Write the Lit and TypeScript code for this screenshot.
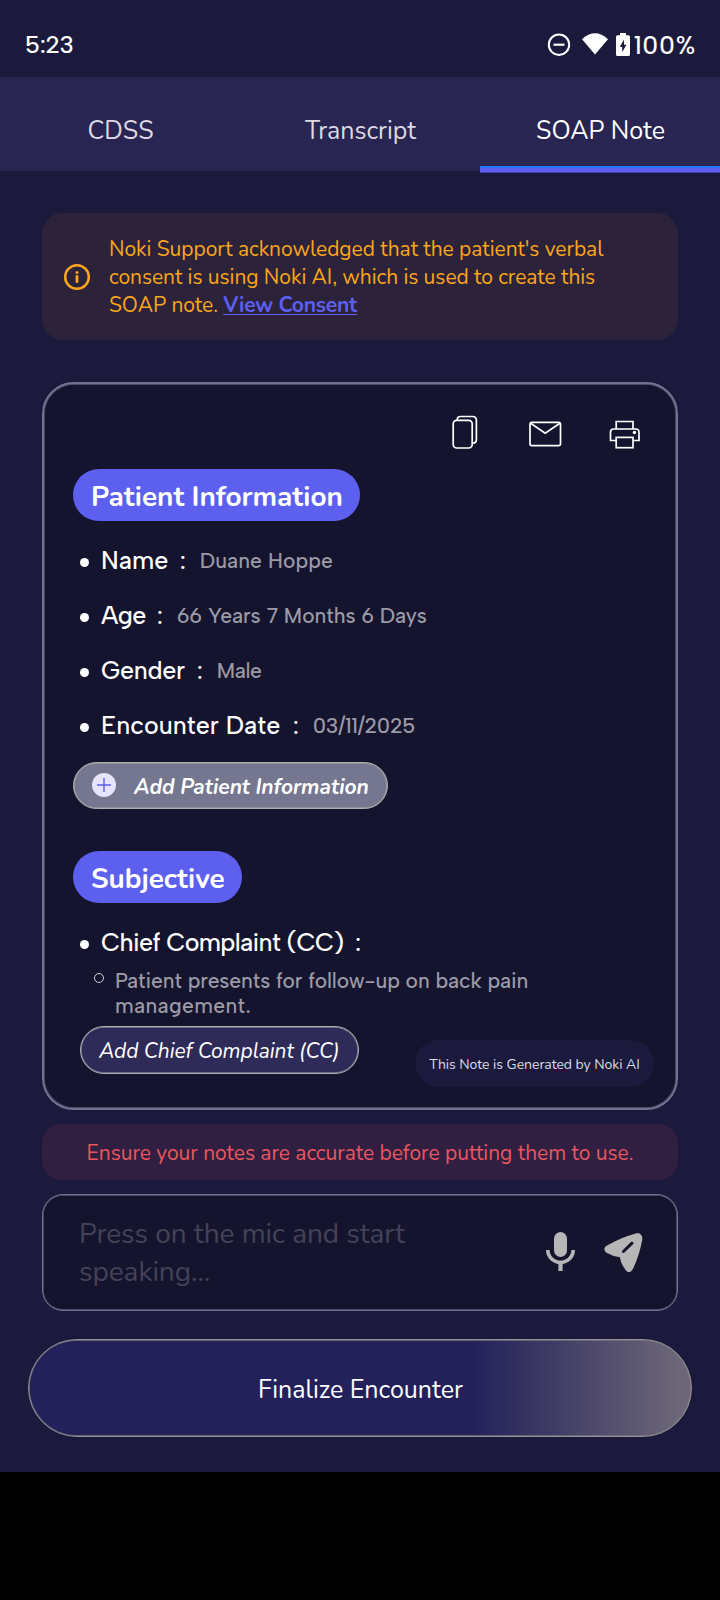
import { LitElement, html, css } from "lit";

const sharedText = css`
  * { box-sizing: border-box; }
  svg { display: block; }
  .noteFont { font-family: "Albert Sans", Lato, sans-serif; font-weight: 500; }
`;

interface Field { cls: string; label: string; value: string; }

const FIELDS: Field[] = [
  { cls: "name", label: "Name", value: "Duane Hoppe" },
  { cls: "age", label: "Age", value: "66 Years 7 Months 6 Days" },
  { cls: "gender", label: "Gender", value: "Male" },
  { cls: "date", label: "Encounter Date", value: "03/11/2025" },
];

class StatusBar extends LitElement {
  static styles = [sharedText, css`
    :host { display: flex; height: 77px; padding: 12px 24px 0 25px; align-items: center; justify-content: space-between;
      line-height: 48px; font-size: 24px; color: #fff; }
    .right { display: flex; align-items: center; }
    .right svg { margin-right: 1px; }
    .clock { letter-spacing: -0.3px; }
    .percent { font-size: 25px; letter-spacing: 0.8px; }
  `];
  render() {
    return html`
      <span class="noteFont clock">5:23</span>
      <span class="right">
        <svg width="86" height="30" viewBox="546 29 86 30">
          <circle cx="558" cy="43.7" r="10.2" fill="none" stroke="#fff" stroke-width="2"/>
          <path d="M552.5 43.7H563.5" stroke="#fff" stroke-width="2.2"/>
          <path d="M581 38.2Q594 26.5 607 38.2L594 53.6Z" fill="#fff"/>
          <path fill="#fff" fill-rule="evenodd" d="M616.5 34.3H619V32H625V34.3H627.5Q629 34.3 629 35.8V53.5Q629 55 627.5 55H616.5Q615 55 615 53.5V35.8Q615 34.3 616.5 34.3ZM623 38.5L618.8 46H621.2V51.3L625.4 43.8H623Z"/>
        </svg>
        <span class="noteFont percent">100%</span>
      </span>`;
  }
}
customElements.define("status-bar", StatusBar);

class TabStrip extends LitElement {
  static styles = [sharedText, css`
    :host { display: grid; grid-template-columns: repeat(3, 1fr); height: 94px; background: #282552; }
    .tab { position: relative; padding: 14px 0 0 1px; line-height: 80px; text-align: center; font-size: 25px; color: #dcd9e2; }
    .active { color: #fff; }
    .active::after { content: ""; position: absolute; left: 0; right: 0; bottom: -2px; height: 7px;
      background: linear-gradient(#1a7bfd 0 1px, #3173f8 1px 2px, #5d5fef 2px 6px, #403fae 6px); }
  `];
  render() {
    return html`<div class="tab">CDSS</div><div class="tab">Transcript</div><div class="tab active">SOAP Note</div>`;
  }
}
customElements.define("tab-strip", TabStrip);

class ConsentNotice extends LitElement {
  static styles = [sharedText, css`
    :host { display: flex; align-items: center; height: 127px; margin: 42px 42px 0; padding-left: 21px; border-radius: 21px;
      background: #2c233b; color: #faa61a; font-size: 21px; line-height: 28px; }
    svg { margin-right: 18px; }
    .text { white-space: nowrap; letter-spacing: -0.06px; }
    .link { color: #5d5fef; font-weight: 700; text-decoration: underline; text-decoration-thickness: 1px; text-underline-offset: 2px; letter-spacing: -0.2px; }
  `];
  render() {
    return html`
      <svg width="28" height="28" viewBox="0 0 28 28"><circle cx="14" cy="14" r="11.8" fill="none" stroke="#faa61a" stroke-width="2.5"/>
        <circle cx="14" cy="9.5" r="1.5" fill="#faa61a"/><path d="M14 13.5V18.7" stroke="#faa61a" stroke-width="2.8" stroke-linecap="round"/></svg>
      <div class="text">Noki Support acknowledged that the patient's verbal<br>consent is using Noki AI, which is used to create this<br>SOAP note. <span class="link">View Consent</span></div>`;
  }
}
customElements.define("consent-notice", ConsentNotice);

class SoapCard extends LitElement {
  static styles = [sharedText, css`
    :host { display: flex; flex-direction: column; align-items: flex-start; position: relative; height: 728px; margin: 42px 42px 0;
      padding: 0 0 0 29px; border: 2px solid #737291; border-radius: 32px; background: #15142e; box-shadow: inset 0 0 0 0.7px #5c5b78; }
    .tools { align-self: flex-end; display: flex; height: 85px; padding: 28px 32px 0 0; }
    .heading { height: 52px; padding: 3px 17.5px 0 18px; border-radius: 26px; background: #5d5fef; color: #fff; font-size: 28px; font-weight: 700; line-height: 51px; margin-bottom: 12px; letter-spacing: -0.06px; }
    .field { display: flex; align-items: center; height: 55px; padding-left: 7px; line-height: 55px; white-space: pre; color: #fff; }
    .dot { width: 9px; height: 9px; margin: 3px 12px 0 0; border-radius: 50%; background: #fff; }
    .label { font-size: 25px; }
    .colon { font-size: 24px; width: 5px; margin: 0 15px 0 11.5px; }
    .value { font-size: 21px; color: #9c9aa6; }
    .name .value { letter-spacing: 0.1px; }
    .age .label { letter-spacing: -0.6px; }
    .age .colon { margin-left: 11px; }
    .age .value { letter-spacing: -0.06px; }
    .gender .label { letter-spacing: -0.3px; }
    .gender .colon { margin-left: 12px; }
    .gender .value { letter-spacing: -0.4px; }
    .date .colon { margin-left: 12.5px; }
    .date .value { letter-spacing: -0.25px; }
    .chief .label { letter-spacing: -0.65px; }
    .pill { display: flex; align-items: center; border-radius: 24px; font-size: 21px; font-style: italic; color: #fff; white-space: nowrap; }
    .addInfo { height: 47px; width: 315px; margin: 9px 0 42px; padding-left: 17px; background: #757690; border: 1px solid #b1afae; box-shadow: inset 0 0 0 0.7px #9c9b9f; font-weight: 700; }
    .addInfo span { padding: 3px 0 0 17px; letter-spacing: -0.06px; }
    .addChief { height: 48px; width: 279px; margin: 8px 0 0 7px; padding: 2px 0 0 18px; background: #2e2b59; border: 1px solid #b1afae; box-shadow: inset 0 0 0 0.7px #85839a; letter-spacing: -0.09px; }
    .complaint { display: flex; margin: -2px 0 0 21px; font-size: 21px; line-height: 25px; color: #9c9aa6; white-space: nowrap; }
    .ring { width: 10px; height: 10px; margin: 5px 11px 0 0; border: 1px solid #d0cfd6; border-radius: 50%; }
    .l1 { letter-spacing: -0.08px; }
    .l2 { letter-spacing: 0.35px; }
    .stamp { position: absolute; right: 22px; bottom: 21px; width: 239px; height: 47px; padding-top: 2px; border-radius: 24px; background: #1b1a3d;
      color: #dedce4; font-size: 14px; line-height: 45px; text-align: center; letter-spacing: -0.04px; }
  `];
  private fieldRow(f: Field) {
    return html`<div class="field noteFont ${f.cls}"><span class="dot"></span><span class="label">${f.label}</span><span class="colon">:</span><span class="value">${f.value}</span></div>`;
  }
  render() {
    return html`
      <div class="tools">
        <svg width="194" height="40" viewBox="450 412 194 40" fill="none" stroke="#fff" stroke-width="1.7">
          <rect x="453.2" y="420.3" width="19" height="27.7" rx="3.5"/>
          <path d="M457.2 420.3V419.5Q457.2 416.5 460.5 416.5H472.5Q476.4 416.5 476.4 420.4V439.5Q476.4 443 473 443.2"/>
          <rect x="530" y="422.3" width="30.5" height="23.3" rx="1.8"/><path d="M530.6 423.2L545.2 433.3L559.9 423.2"/>
          <path d="M616.2 429V421.5H633V429M616.2 440.5H610.5V432.3Q610.5 429 613.8 429H635.7Q639 429 639 432.3V440.5H633"/>
          <rect x="616.2" y="437.4" width="16.8" height="10.3"/><circle cx="634.4" cy="432.5" r="1.7" fill="#fff" stroke="none"/>
        </svg>
      </div>
      <div class="heading">Patient Information</div>
      ${FIELDS.map((f) => this.fieldRow(f))}
      <div class="pill addInfo">
        <svg width="26" height="26" viewBox="0 0 26 26"><circle cx="13" cy="12" r="12" fill="#e5e4fc"/><path d="M6 12H20M13 5V19" stroke="#5d5fef" stroke-width="1.4"/></svg>
        <span>Add Patient Information</span>
      </div>
      <div class="heading">Subjective</div>
      ${this.fieldRow({ cls: "chief", label: "Chief Complaint (CC)", value: "" })}
      <div class="complaint noteFont"><span class="ring"></span><div><div class="l1">Patient presents for follow-up on back pain</div><div class="l2">management.</div></div></div>
      <div class="pill addChief">Add Chief Complaint (CC)</div>
      <div class="stamp">This Note is Generated by Noki AI</div>`;
  }
}
customElements.define("soap-card", SoapCard);

class AppRoot extends LitElement {
  static styles = [sharedText, css`
    :host { display: block; height: 1600px; background: #000; font-family: Nunito, Lato, sans-serif; overflow: hidden; }
    .screen { height: 1472px; background: #1b1a3d; }
    .warning { height: 56px; margin: 14px 42px; padding-top: 2px; border-radius: 20px; background: #301f40; color: #e9565f; font-size: 21px; line-height: 54px; text-align: center; letter-spacing: -0.04px; }
    .prompt { display: flex; justify-content: space-between; height: 117px; margin: 0 42px; padding: 20px 32px 0 36px; border: 1px solid #737291; box-shadow: inset 0 0 0 0.7px #5c5b78;
      border-radius: 21px; background: #15142e; color: #444257; font-size: 28px; line-height: 38px; letter-spacing: -0.03px; }
    .actions { margin-top: 15px; }
    .finalize { height: 98px; margin: 28px 28px 0; padding: 3px 0 0 1px; border: 1px solid #94918f; border-radius: 49px; box-shadow: inset 0 0 0 0.7px #77748a;
      background: linear-gradient(90deg, #23215a 67%, #6c6678 98%); color: #fff; font-size: 25px; line-height: 94px; text-align: center; }
  `];
  render() {
    return html`
      <div class="screen">
        <status-bar></status-bar>
        <tab-strip></tab-strip>
        <consent-notice></consent-notice>
        <soap-card></soap-card>
        <div class="warning">Ensure your notes are accurate before putting them to use.</div>
        <div class="prompt">
          <div>Press on the mic and start<br>speaking...</div>
          <svg class="actions" width="100" height="44" viewBox="545 1230 100 44">
            <g fill="#b7b6b7"><rect x="554" y="1232" width="13" height="25" rx="6.5"/><rect x="558.4" y="1263" width="4.2" height="8"/>
            <path transform="translate(603 1232.5)" d="M5.5 12.2Q18 5 32 1.2C36.8 -.2 40 2.6 39.2 7.5Q36.5 22 30.8 34.5C28.8 40.6 24.2 41 22 36.5Q17.6 31 17 24.8Q9.5 23.8 4 20.5C0 18 .5 14.2 5.5 12.2Z"/></g>
            <path d="M547.8 1250a12.7 12.4 0 0 0 25.4 0" fill="none" stroke="#b7b6b7" stroke-width="3.6"/>
            <path d="M623.4 1251.5L632 1243.2" stroke="#15142e" stroke-width="3" stroke-linecap="round"/>
          </svg>
        </div>
        <div class="finalize">Finalize Encounter</div>
      </div>`;
  }
}
customElements.define("app-root", AppRoot);
